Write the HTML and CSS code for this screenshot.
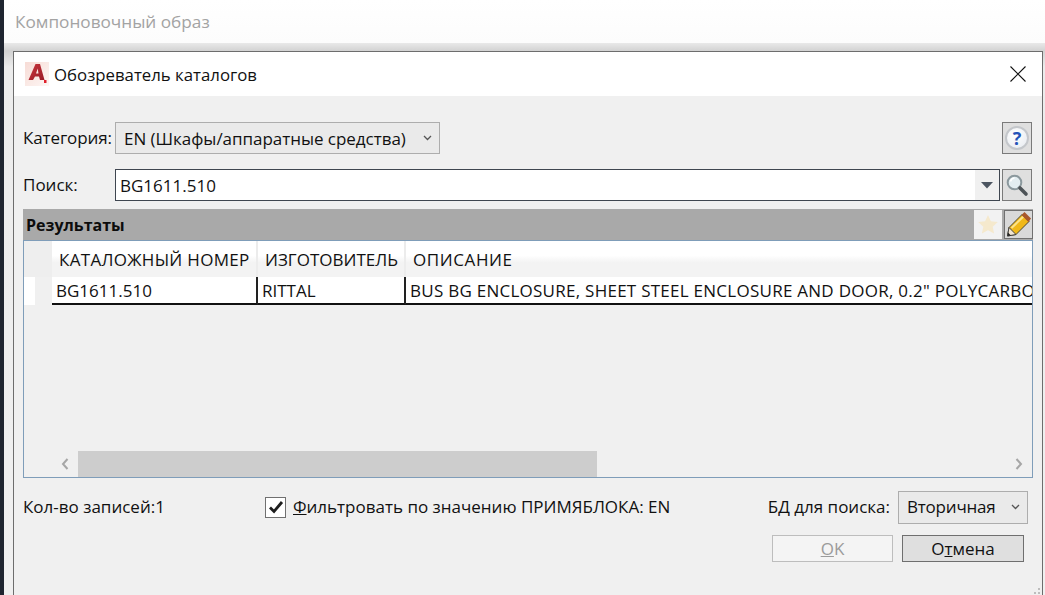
FILE: index.html
```html
<!DOCTYPE html>
<html lang="ru">
<head>
<meta charset="utf-8">
<title>Обозреватель каталогов</title>
<link rel="stylesheet" href="styles.css">
</head>
<body>
<div class="app">
  <div class="app-title">Компоновочный образ</div>
  <div class="backdrop">
    <div class="dialog">
      <header class="titlebar">
        <svg class="logo" width="24" height="24" viewBox="0 0 24 24">
          <defs>
            <linearGradient id="logo-bg" x1="0" y1="0" x2="1" y2="1"><stop offset="0" stop-color="#f7dcd6"/><stop offset="1" stop-color="#fdf6f4"/></linearGradient>
            <linearGradient id="logo-a" x1="0" y1="0" x2="1" y2="1"><stop offset="0" stop-color="#c8343c"/><stop offset="1" stop-color="#9a1c28"/></linearGradient>
          </defs>
          <rect width="24" height="24" fill="url(#logo-bg)"/>
          <path d="M3.500 18 L10.500 2 H15 L19.500 18 H15 L14 14.500 H10 L8 18 Z M11 11.500 H13.500 L12.700 6.500 Z" fill="url(#logo-a)" fill-rule="evenodd"/>
          <rect x="19" y="18" width="2.500" height="3" fill="#e0202c"/>
        </svg>
        <span class="titlebar-text">Обозреватель каталогов</span>
        <svg class="close" width="16" height="16" viewBox="0 0 16 16"><path d="M.5.5l15 15M15.500.5l-15 15" stroke="#111" stroke-width="1.100" fill="none"/></svg>
      </header>
      <main class="body">
        <div class="row-category">
          <label class="label label-cat">Категория:</label>
          <div class="select select-cat"><span>EN (Шкафы/аппаратные средства)</span>
            <svg class="chev" width="9" height="6" viewBox="0 0 9 6"><path d="M1 1l3.500 3.500L8 1" stroke="#555" stroke-width="1.300" fill="none"/></svg>
          </div>
          <button class="tool help" aria-label="Справка">
            <span class="help-disc">?</span>
          </button>
        </div>
        <div class="row-search">
          <label class="label label-search">Поиск:</label>
          <div class="combo">
            <span class="combo-text">BG1611.510</span>
            <span class="combo-arrow"><svg width="14" height="8" viewBox="0 0 14 8"><path d="M1 1h12L7 7.500z" fill="#4c5560"/></svg></span>
          </div>
          <button class="tool" aria-label="Поиск">
            <svg width="24" height="24" viewBox="0 0 24 24">
              <circle cx="9.500" cy="9.500" r="6.800" fill="#e3edf1" stroke="#8b989d" stroke-width="2"/>
              <path d="M5.500 8.500a4.500 4.500 0 0 1 4-3.500" stroke="#fff" stroke-width="1.500" fill="none"/>
              <path d="M15 15l6 6" stroke="#4d5357" stroke-width="3.600" stroke-linecap="round"/>
            </svg>
          </button>
        </div>
        <section class="results">
          <div class="results-head">
            <span class="results-title">Результаты</span>
            <span class="star-btn">
              <svg width="22" height="21" viewBox="0 0 22 21"><path d="M11 1l2.900 6.300 6.900.8-5.100 4.700 1.400 6.800L11 16.200l-6.100 3.400 1.400-6.800L1.200 8.100l6.900-.8z" fill="#f5e9cd"/></svg>
            </span>
            <span class="pencil-btn">
              <svg width="27" height="27" viewBox="0 0 27 27">
                <path d="M2.500 25 L4 16.500 L17 3.500 L24 10.500 L11 23.500 Z" fill="#f0b818" stroke="#4a4632" stroke-width="1"/>
                <path d="M6.500 17 L18.500 5.500" stroke="#fbe38a" stroke-width="2"/>
                <path d="M16.500 4 L19.500 1 L26 7.500 L23.500 11 Z" fill="#a8562a"/>
                <path d="M2.500 25 L4 16.500 L11 23.500 Z" fill="#f3e6d2" stroke="#444" stroke-width="1"/>
                <path d="M2.500 25 L3 21.500 L6 24.500 Z" fill="#222"/>
              </svg>
            </span>
          </div>
          <div class="grid">
            <div class="grid-header">
              <div class="corner"></div>
              <div class="col col-1">КАТАЛОЖНЫЙ НОМЕР</div>
              <div class="col col-2">ИЗГОТОВИТЕЛЬ</div>
              <div class="col col-3">ОПИСАНИЕ</div>
            </div>
            <div class="grid-row">
              <div class="row-head"></div>
              <div class="cell col-1">BG1611.510</div>
              <div class="cell col-2">RITTAL</div>
              <div class="cell col-3">BUS BG ENCLOSURE, SHEET STEEL ENCLOSURE AND DOOR, 0.2" POLYCARBON</div>
            </div>
            <div class="grid-space"></div>
            <div class="hscroll">
              <span class="arrow arrow-left"><svg width="8" height="12" viewBox="0 0 8 12"><path d="M6.500 1L2 6l4.500 5" stroke="#a6a6a6" stroke-width="2" fill="none"/></svg></span>
              <span class="thumb"></span>
              <span class="arrow arrow-right"><svg width="8" height="12" viewBox="0 0 8 12"><path d="M1.500 1L6 6l-4.500 5" stroke="#a6a6a6" stroke-width="2" fill="none"/></svg></span>
            </div>
          </div>
        </section>
        <div class="row-footer">
          <span class="count">Кол-во записей:1</span>
          <label class="filter">
            <span class="check"><svg width="16" height="14" viewBox="0 0 16 14"><path d="M2 7.500l4 4L14 2" stroke="#1d1d1d" stroke-width="2.800" fill="none"/></svg></span>
            <span class="filter-text"><u>Ф</u>ильтровать по значению ПРИМЯБЛОКА: EN</span>
          </label>
          <span class="db-label">БД для поиска:</span>
          <div class="select select-db"><span class="db-value">Вторичная</span>
            <svg class="chev" width="9" height="6" viewBox="0 0 9 6"><path d="M1 1l3.500 3.500L8 1" stroke="#555" stroke-width="1.300" fill="none"/></svg>
          </div>
        </div>
        <div class="row-buttons">
          <button class="btn btn-off"><u>O</u>K</button>
          <button class="btn btn-cancel">О<u>т</u>мена</button>
        </div>
        <svg class="grip" width="16" height="16" viewBox="0 0 16 16" fill="#bdbdbd">
          <rect x="13" y="1" width="2" height="2"/><rect x="13" y="5" width="2" height="2"/><rect x="13" y="9" width="2" height="2"/><rect x="13" y="13" width="2" height="2"/>
          <rect x="9" y="5" width="2" height="2"/><rect x="9" y="9" width="2" height="2"/><rect x="9" y="13" width="2" height="2"/>
          <rect x="5" y="9" width="2" height="2"/><rect x="5" y="13" width="2" height="2"/><rect x="1" y="13" width="2" height="2"/>
        </svg>
      </main>
    </div>
  </div>
</div>
</body>
</html>
```

FILE: styles.css
```css
* { box-sizing: border-box; }
html, body { margin: 0; height: 100%; overflow: hidden; }
body {
  font-family: "Open Sans", "Noto Sans", sans-serif;
  font-size: 17px;
  color: #111;
  background: #1f2530;
}
.app {
  height: 595px;
  margin-left: 4px;
  display: flex;
  flex-direction: column;
  background: #fff;
}
.app-title {
  height: 43px;
  padding: 10px 0 0 11px;
  font-size: 17.2px;
  line-height: 24px;
  color: #a3a3a3;
  background: linear-gradient(#fff 0, #fcfcfc 100%);
}
.backdrop {
  flex: 1;
  min-height: 0;
  padding: 8px 2px 0 9px;
  background: linear-gradient(#e9e9e9 0, #d2d2d2 8px, #ececec 24px, #f0f0f0 100%);
}
.dialog {
  height: 552px;
  display: flex;
  flex-direction: column;
  border: 1px solid #6d6d6d;
  border-bottom: 0;
  background: #f0f0f0;
}
.titlebar {
  height: 44px;
  flex: none;
  display: flex;
  align-items: center;
  padding: 0 16px 0 11px;
  background: #fff;
}
.logo { flex: none; }
.titlebar-text { margin-left: 5px; font-size: 16.8px; }
.close { margin-left: auto; }
.body {
  position: relative;
  flex: 1;
  min-height: 0;
  padding: 26px 9px 0 9px;
  background: #f0f0f0;
}
.label { line-height: 22px; }
.row-category {
  height: 32px;
  display: flex;
  align-items: center;
}
.label-cat { width: 92px; flex: none; white-space: nowrap; letter-spacing: -.12px; }
.select {
  display: flex;
  align-items: center;
  border: 1px solid #adadad;
  background: #eaeaea;
  white-space: nowrap;
}
.select-cat { width: 325px; height: 32px; padding: 0 7px 0 8px; justify-content: space-between; letter-spacing: -.03px; }
.tool {
  width: 30px;
  height: 32px;
  padding: 0;
  margin: 0;
  flex: none;
  display: flex;
  align-items: center;
  justify-content: center;
  border: 1px solid #7a7a7a;
  background: #dfdfdf;
}
.help { margin-left: auto; margin-right: 1px; }
.help-disc {
  width: 24px;
  height: 24px;
  border-radius: 50%;
  border: 2px solid #c4c7cb;
  background: radial-gradient(circle at 40% 35%, #fff, #e6eaef);
  color: #2553b8;
  font: 700 18px/20px "Open Sans", sans-serif;
  text-align: center;
}
.row-search {
  height: 32px;
  margin-top: 15px;
  display: flex;
  align-items: center;
}
.label-search { width: 92px; flex: none; }
.combo {
  flex: 1;
  height: 32px;
  display: flex;
  align-items: stretch;
  border: 1px solid #3f4650;
  background: #fff;
  margin-right: 2px;
}
.combo-text { flex: 1; padding: 0 4px; line-height: 31px; }
.combo-arrow {
  width: 24px;
  display: flex;
  align-items: center;
  justify-content: center;
  background: #f0f0f0;
}
.row-search .tool { margin-right: 1px; }
.results { margin-top: 8px; }
.results-head {
  height: 31px;
  display: flex;
  align-items: center;
  justify-content: flex-end;
  background: #a9a9a9;
}
.results-title { margin-right: auto; padding-left: 3px; font-weight: 700; font-size: 16px; color: #0c0c0c; }
.star-btn, .pencil-btn {
  height: 29px;
  display: flex;
  align-items: center;
  justify-content: center;
}
.star-btn { width: 28px; background: #f2f2f2; margin-right: 2px; }
.pencil-btn { width: 29px; background: #d9d9d9; border: 1px solid #707070; }
.grid {
  height: 238px;
  display: flex;
  flex-direction: column;
  border: 1px solid #7f9db9;
  overflow: hidden;
}
.grid-header {
  height: 36px;
  flex: none;
  display: flex;
  background: linear-gradient(#fff 0 40%, #f3f3f3 60%);
}
.corner { width: 28px; flex: none; background: #eeeeee; }
.col {
  line-height: 37px;
  padding-left: 7px;
  border-right: 2px solid #ececec;
  white-space: nowrap;
}
.col-1 { width: 206px; flex: none; }
.col-2 { width: 148px; flex: none; }
.col-3 { flex: 1; min-width: 0; }
.grid-header .col-1 { letter-spacing: .3px; }
.grid-header .col-3 { border-right: 0; letter-spacing: .6px; }
.grid-row {
  height: 28px;
  flex: none;
  display: flex;
  white-space: nowrap;
}
.row-head { width: 28px; flex: none; background: linear-gradient(90deg, #fff 0 40%, #f0f0f0 40%); }
.cell {
  padding-left: 4px;
  line-height: 28px;
  background: #fff;
  border-bottom: 2px solid #111;
  border-right: 2px solid #222;
  overflow: hidden;
}
.cell.col-3 { border-right: 0; letter-spacing: .26px; }
.grid-space { flex: 1; }
.hscroll {
  height: 26px;
  flex: none;
  display: flex;
  align-items: center;
}
.arrow { display: flex; align-items: center; justify-content: center; }
.arrow-left { width: 54px; height: 26px; padding-left: 28px; }
.thumb { width: 519px; height: 26px; background: #cdcdcd; }
.arrow-right { margin-left: auto; width: 26px; height: 26px; }
.row-footer {
  height: 30px;
  margin-top: 14px;
  display: flex;
  align-items: center;
  white-space: nowrap;
}
.count, .filter-text, .db-label, .db-value { padding-bottom: 2px; }
.count { width: 242px; flex: none; }
.filter { display: flex; align-items: center; gap: 7px; }
.check {
  width: 21px;
  height: 21px;
  display: flex;
  align-items: center;
  justify-content: center;
  background: #fff;
  border: 1px solid #707070;
}
.db-label { margin-left: auto; margin-right: 8px; }
.select-db { width: 130px; height: 33px; padding: 0 7px 0 8px; justify-content: space-between; margin-right: 5px; }
.db-value { letter-spacing: -.2px; }
.row-buttons {
  margin-top: 13px;
  display: flex;
  justify-content: flex-end;
  gap: 9px;
  padding-right: 9px;
}
.btn {
  width: 121px;
  height: 27px;
  padding: 0;
  font: inherit;
  line-height: 25px;
  color: #111;
}
.btn-off { color: #9b9b9b; background: #f4f4f4; border: 1px solid #bdbdbd; }
.btn-cancel { width: 122px; background: #dfdfdf; border: 1px solid #6f6f6f; }
.grip { position: absolute; right: 1px; bottom: 0; }
```
